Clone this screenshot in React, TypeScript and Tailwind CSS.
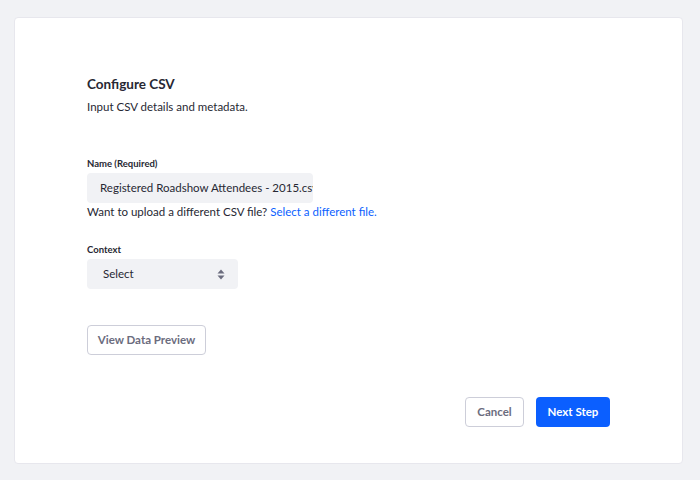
export default function App() {
  return (
    <div
      className="h-[480px] w-[700px] bg-[#f1f2f5] pt-[17px] pl-[14px] pr-[17px] pb-[16px]"
      style={{ fontFamily: "Lato, 'Liberation Sans', sans-serif" }}
    >
      <div className="flex h-[447px] flex-col rounded-[4px] border border-[#e7e7ed] bg-white px-[72px] pt-[56px]">
        <h2 className="text-[13.5px] font-bold leading-[20px] text-[#272833]">Configure CSV</h2>
        <p className="mt-[3px] text-[11.5px] leading-[20px] text-[#272833]">Input CSV details and metadata.</p>

        <label className="mt-[40px] text-[9.5px] font-bold leading-[14px] text-[#272833]">Name (Required)</label>
        <div className="mt-[2px] h-[30px] w-[226px] overflow-hidden whitespace-nowrap rounded-[4px] bg-[#f1f2f5] px-[13px] text-[11.5px] leading-[30px] text-[#272833]">
          Registered Roadshow Attendees - 2015.csv
        </div>
        <p className="text-[11.5px] leading-[17px] text-[#272833]">
          Want to upload a different CSV file?{" "}
          <a className="text-[#0b5fff]">Select a different file.</a>
        </p>

        <label className="mt-[23px] text-[9.5px] font-bold leading-[14px] text-[#272833]">Context</label>
        <div className="mt-[2px] flex h-[30px] w-[151px] items-center justify-between rounded-[4px] bg-[#f1f2f5] pl-[16px] pr-[13px] text-[11.5px] text-[#272833]">
          <span>Select</span>
          <svg width="8" height="11" viewBox="0 0 8 11">
            <path d="M4 0.5 L7.5 4.5 H0.5 Z" fill="#6b6c7e" />
            <path d="M4 10.5 L7.5 6.5 H0.5 Z" fill="#6b6c7e" />
          </svg>
        </div>

        <button className="mt-[36px] h-[30px] w-[119px] rounded-[4px] border border-[#cdced9] bg-white text-[11.5px] font-bold text-[#6b6c7e]">
          View Data Preview
        </button>

        <div className="mt-[42px] flex justify-end gap-[12px]">
          <button className="h-[30px] w-[59px] rounded-[4px] border border-[#cdced9] bg-white text-[11.5px] font-bold text-[#6b6c7e]">
            Cancel
          </button>
          <button className="h-[30px] w-[74px] rounded-[4px] bg-[#0b5fff] text-[11.5px] font-bold text-white">
            Next Step
          </button>
        </div>
      </div>
    </div>
  );
}
